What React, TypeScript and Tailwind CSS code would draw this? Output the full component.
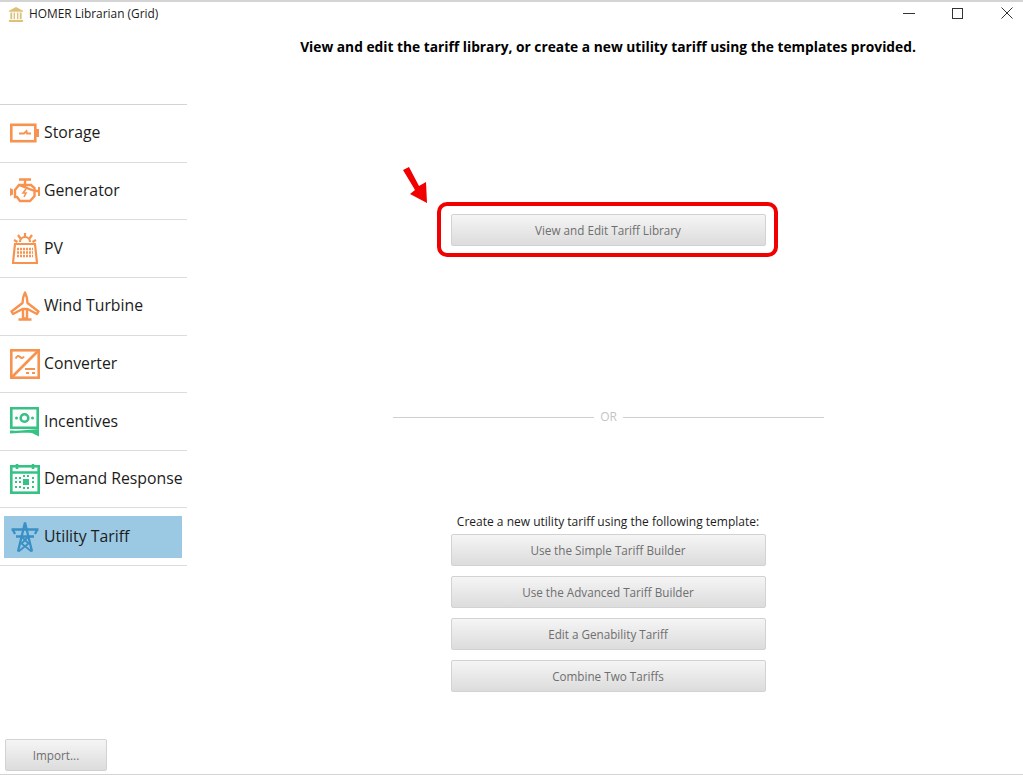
import React from "react";

const orange = "#f7924f";
const green = "#35c285";
const blue = "#3a8fc4";

const StorageIcon = () => (
  <svg width="29" height="20" viewBox="0 0 29 20" fill="none" stroke={orange} strokeWidth="2.6">
    <rect x="1.300" y="1.800" width="24" height="16.400" />
    <path d="M26 6h3v8h-3" fill={orange} stroke="none" />
    <path d="M9 10.500h5l2.500-2.500 .5 2.500h4" strokeWidth="1.800" />
  </svg>
);

const GeneratorIcon = () => (
  <svg width="30" height="26" viewBox="0 0 30 26" fill="none" stroke={orange} strokeWidth="2.4">
    <path d="M9 1.500h12M15 2v5" />
    <path d="M9 7h12l3.500 3v3h3.500M24.500 13v5l-4.500 5H10l-3-4H5v-7l4-5z" />
    <path d="M0 10v8l3-1.500v-5z" fill={orange} stroke="none" />
    <path d="M28 9h2v9h-2z" fill={orange} stroke="none" />
    <path d="M16 11l-3 4h3l-2 4" strokeWidth="1.600" />
  </svg>
);

const PvIcon = () => (
  <svg width="26" height="31" viewBox="0 0 26 31" fill="none" stroke={orange} strokeWidth="2.200">
    <path d="M8 9a5 5 0 0 1 10 0" />
    <path d="M13 0v4M6 2l2.500 3.500M20 2l-2.500 3.500M2 7l3.500 2M24 7l-3.500 2" />
    <path d="M3 11h20l2 19H1z" />
    <path d="M5 16h16M5 19.500h16M5 23h16" strokeDasharray="2 1" strokeWidth="2.400" />
  </svg>
);

const WindIcon = () => (
  <svg width="30" height="30" viewBox="0 0 30 30" fill="none" stroke={orange} strokeWidth="2.400" strokeLinejoin="round">
    <path d="M15 1.500c-1.500 3-2.500 7-2.500 10.500L1.500 20.500l1.500 2.500 9.500-5h5l9.500 5 1.500-2.500L17.500 12c0-3.500-1-7.500-2.500-10.500z" />
    <path d="M13 18v9.500h4V18M8.500 28.500h13" />
  </svg>
);

const ConverterIcon = () => (
  <svg width="30" height="30" viewBox="0 0 30 30" fill="none" stroke={orange} strokeWidth="2.600">
    <rect x="1.300" y="1.300" width="27.400" height="27.400" />
    <path d="M1.500 28.500l27-27" />
    <path d="M5.500 9.500c2-3 3-3 4.500-1.500s2.500 1.500 4-.5" strokeWidth="2" />
    <path d="M15 20h10M16 24h3M22 24h3" strokeWidth="2" />
  </svg>
);

const IncentivesIcon = () => (
  <svg width="29" height="30" viewBox="0 0 29 30" fill="none" stroke={green} strokeWidth="2.600">
    <path d="M1.300 1.300h26.400v19.400H1.300z" />
    <circle cx="14.500" cy="11" r="3.800" />
    <circle cx="6.500" cy="11" r="1.500" fill={green} stroke="none" />
    <circle cx="22.500" cy="11" r="1.500" fill={green} stroke="none" />
    <path d="M0 23.500c9 .5 19-.5 29-1.500v7.500l-7-3.500c-7-.5-15 0-22 .5z" fill={green} stroke="none" />
  </svg>
);

const DemandIcon = () => (
  <svg width="30" height="30" viewBox="0 0 30 30" fill="none" stroke={green} strokeWidth="2.600">
    <rect x="1.300" y="2.300" width="27.400" height="26.400" />
    <path d="M1 8.500h28M7 0v5M23 0v5" />
    <rect x="13" y="15" width="6" height="6" fill={green} stroke="none" />
    <path d="M5 14h2M9 14h2M13 12h2M17 12h2M22 14h2M5 18h2M9 18h2M22 18h2M5 23h2M9 23h2M13 24h2M17 24h2M22 23h2" strokeWidth="2" />
  </svg>
);

const TowerIcon = () => (
  <svg width="28" height="30" viewBox="0 0 28 30" fill="none" stroke={blue} strokeWidth="2.300" strokeLinejoin="round">
    <path d="M14 0.500L7 29.500M14 0.500l7 29" />
    <path d="M0.500 7.500h27M5 14.500h18M2 8l2 4M26 8l-2 4" />
    <path d="M10.500 14.500l7 7-10 8M17.500 14.500l-7 7 10 8" strokeWidth="1.800" />
  </svg>
);

const items = [
  { label: "Storage", icon: <StorageIcon /> },
  { label: "Generator", icon: <GeneratorIcon /> },
  { label: "PV", icon: <div className="pl-[2px]"><PvIcon /></div> },
  { label: "Wind Turbine", icon: <WindIcon /> },
  { label: "Converter", icon: <ConverterIcon /> },
  { label: "Incentives", icon: <IncentivesIcon /> },
  { label: "Demand Response", icon: <DemandIcon /> },
];

const GrayButton = ({ label }: { label: string }) => (
  <button className="w-[315px] h-[32px] pt-[1px] rounded-[2px] border border-[#d2d2d2] bg-gradient-to-b from-[#f5f5f5] to-[#dcdcdc] text-[11.7px] text-[#6f6f6f]">
    {label}
  </button>
);

const App = () => {
  return (
    <div className="w-[1023px] h-[775px] flex flex-col bg-white border-t-2 border-b border-[#d4d4d4] overflow-hidden font-['Open_Sans',sans-serif] text-[#1c1c1c]">
      {/* Title bar */}
      <div className="h-[26px] pb-[2px] flex items-center justify-between shrink-0">
        <div className="flex items-center pl-[8px] gap-[5px]">
          <svg width="16" height="16" viewBox="0 0 17 17" fill="#dcc277">
            <path d="M8.500 1L16 5v1H1V5z" />
            <path d="M2.500 7h2v7h-2zM6 7h1.500v7H6zM9.500 7H11v7H9.500zM12.500 7h2v7h-2zM1 15h15v2H1z" />
          </svg>
          <span className="text-[11.9px]">HOMER Librarian (Grid)</span>
        </div>
        <div className="flex items-center gap-[37px] pr-[10px] mb-[2px]">
          <div className="w-[12px] h-px bg-[#333333]" />
          <div className="w-[12px] flex justify-start">
            <div className="w-[11px] h-[11px] border border-[#333333]" />
          </div>
          <svg width="12" height="12" viewBox="0 0 12 12" stroke="#333333" strokeWidth="1">
            <path d="M0.500 0.500l11 11M11.500 0.500l-11 11" />
          </svg>
        </div>
      </div>

      <div className="flex flex-1 min-h-0">
        {/* Sidebar */}
        <div className="w-[187px] shrink-0 flex flex-col">
          <div className="mt-[76px] border-t border-[#d4d4d4]">
            {items.map((item) => (
              <div key={item.label} className="h-[57.65px] border-b border-[#dcdcdc] flex items-center">
                <div className="w-[44px] pl-[10px] shrink-0 flex items-center">{item.icon}</div>
                <span className="text-[15.8px] whitespace-nowrap">{item.label}</span>
              </div>
            ))}
            <div className="h-[57.65px] border-b border-[#dcdcdc] flex items-center px-[4px]">
              <div className="w-[178px] h-[42px] bg-[#9bc9e4] flex items-center">
                <div className="w-[40px] pl-[7px] shrink-0 flex items-center">
                  <TowerIcon />
                </div>
                <span className="text-[15.8px] whitespace-nowrap">Utility Tariff</span>
              </div>
            </div>
          </div>
          <div className="mt-auto pl-[5px] pb-[3px]">
            <button className="w-[102px] h-[32px] pt-[1px] rounded-[2px] border border-[#d2d2d2] bg-gradient-to-b from-[#f5f5f5] to-[#dcdcdc] text-[11.7px] text-[#6f6f6f]">
              Import...
            </button>
          </div>
        </div>

        {/* Main */}
        <div className="flex-1 flex flex-col items-center pl-[6px]">
          <h1 className="mt-[9px] text-[13.77px] leading-[19px] font-bold text-black whitespace-nowrap">
            View and edit the tariff library, or create a new utility tariff using the templates provided.
          </h1>

          <div className="relative mt-[158px]">
            <GrayButton label="View and Edit Tariff Library" />
            {/* red annotation */}
            <div className="absolute left-[-14px] top-[-12px] w-[341px] h-[55px] rounded-[10px] border-[4px] border-[#f00000]" />
            <svg className="absolute left-[-51px] top-[-49px]" width="30" height="40" viewBox="0 0 30 40" fill="#f00000">
              <path d="M3 5L9 2 19 21 26 17 27 38 10 29 15 25z" />
            </svg>
          </div>

          <div className="mt-[162px] ml-[1px] flex items-center gap-[6px]">
            <div className="w-[201px] h-px bg-[#cfcfcf]" />
            <span className="text-[12px] text-[#c4c4c4]">OR</span>
            <div className="w-[201px] h-px bg-[#cfcfcf]" />
          </div>

          <div className="mt-[87px] text-[12px] leading-[18px] whitespace-nowrap">
            Create a new utility tariff using the following template:
          </div>
          <div className="mt-[3px] flex flex-col gap-[10px]">
            <GrayButton label="Use the Simple Tariff Builder" />
            <GrayButton label="Use the Advanced Tariff Builder" />
            <GrayButton label="Edit a Genability Tariff" />
            <GrayButton label="Combine Two Tariffs" />
          </div>
        </div>
      </div>
    </div>
  );
};

export default App;
